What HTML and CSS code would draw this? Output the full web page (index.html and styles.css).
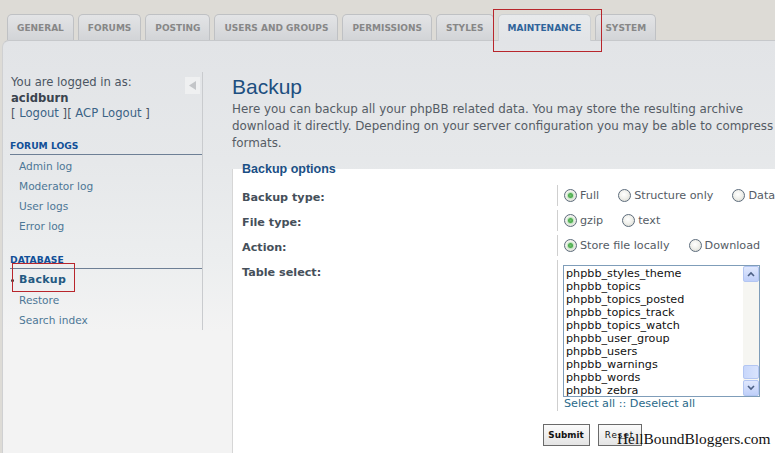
FILE: index.html
```html
<!DOCTYPE html>
<html>
<head>
<meta charset="utf-8">
<title>Backup</title>
<link rel="stylesheet" href="styles.css">
</head>
<body>
<div class="page">
  <ul class="tabs">
    <li class="tab">GENERAL</li>
    <li class="tab">FORUMS</li>
    <li class="tab">POSTING</li>
    <li class="tab">USERS AND GROUPS</li>
    <li class="tab">PERMISSIONS</li>
    <li class="tab">STYLES</li>
    <li class="tab active">MAINTENANCE</li>
    <li class="tab">SYSTEM</li>
  </ul>
  <div class="panel">
    <div class="side">
      <div class="login">
        <div class="login-text">You are logged in as:<br><strong>acidburn</strong><br>[ <a class="lnk">Logout</a> ][ <a class="lnk">ACP Logout</a> ]</div>
        <span class="collapse"><svg width="15" height="17" viewBox="0 0 15 17"><path d="M4 8.5 L11 4 L11 13 Z" fill="#c3c5c8"/></svg></span>
      </div>
      <div class="menu">
        <h3>FORUM LOGS</h3>
        <ul>
          <li><a>Admin log</a></li>
          <li><a>Moderator log</a></li>
          <li><a>User logs</a></li>
          <li><a>Error log</a></li>
        </ul>
        <h3>DATABASE</h3>
        <ul>
          <li class="active"><a>Backup</a></li>
          <li><a>Restore</a></li>
          <li><a>Search index</a></li>
        </ul>
      </div>
    </div>
    <div class="main">
      <h1>Backup</h1>
      <p class="intro">Here you can backup all your phpBB related data. You may store the resulting archive<br>download it directly. Depending on your server configuration you may be able to compress the file in a number of<br>formats.</p>
      <fieldset>
        <legend>Backup options</legend>
        <dl>
          <dt>Backup type:</dt>
          <dd>
            <label class="opt"><span class="radio on"></span>Full</label>
            <label class="opt"><span class="radio"></span>Structure only</label>
            <label class="opt"><span class="radio"></span>Data only</label>
          </dd>
        </dl>
        <dl>
          <dt>File type:</dt>
          <dd>
            <label class="opt"><span class="radio on"></span>gzip</label>
            <label class="opt"><span class="radio"></span>text</label>
          </dd>
        </dl>
        <dl>
          <dt>Action:</dt>
          <dd>
            <label class="opt"><span class="radio on"></span>Store file locally</label>
            <label class="opt"><span class="radio"></span>Download</label>
          </dd>
        </dl>
        <dl>
          <dt>Table select:</dt>
          <dd class="dd-block">
            <div class="select">
              <div class="options">
                <div>phpbb_styles_theme</div>
                <div>phpbb_topics</div>
                <div>phpbb_topics_posted</div>
                <div>phpbb_topics_track</div>
                <div>phpbb_topics_watch</div>
                <div>phpbb_user_group</div>
                <div>phpbb_users</div>
                <div>phpbb_warnings</div>
                <div>phpbb_words</div>
                <div>phpbb_zebra</div>
              </div>
              <div class="sb">
                <span class="sb-btn"><svg width="8" height="6" viewBox="0 0 8 6"><path d="M1 5 L4 2 L7 5" fill="none" stroke="#4d6185" stroke-width="1.6"/></svg></span>
                <span class="sb-track"><span class="sb-thumb"></span></span>
                <span class="sb-btn"><svg width="8" height="6" viewBox="0 0 8 6"><path d="M1 1 L4 4 L7 1" fill="none" stroke="#4d6185" stroke-width="1.6"/></svg></span>
              </div>
            </div>
            <div class="selall"><a>Select all</a> :: <a>Deselect all</a></div>
          </dd>
        </dl>
        <div class="buttons">
          <span class="btn btn-submit">Submit</span>
          <span class="btn btn-reset">Reset</span>
        </div>
      </fieldset>
    </div>
  </div>
  <div class="mark mark-tab"></div>
  <div class="mark mark-menu"></div>
  <div class="watermark">HellBoundBloggers.com</div>
</div>
</body>
</html>
```
FILE: styles.css
```css
html, body {
  margin: 0;
  padding: 0;
  height: 100%;
  overflow: hidden;
}
body {
  background: #dddbd6;
  font-family: "DejaVu Sans", Verdana, sans-serif;
  color: #4b5562;
}
.page {
  position: relative;
  width: 1000px;
}
.tabs {
  display: flex;
  gap: 4px;
  list-style: none;
  margin: 0;
  padding: 14px 0 0 7px;
  align-items: flex-end;
}
.tab {
  box-sizing: border-box;
  height: 26px;
  padding: 0 9px;
  border: 1px solid #bfc1c4;
  border-bottom: none;
  border-radius: 5px 5px 0 0;
  background: linear-gradient(#e3e4e6, #d2d4d7);
  font: bold 9px/26px "DejaVu Sans", sans-serif;
  color: #878787;
  white-space: nowrap;
}
.tab.active {
  height: 27px;
  margin-bottom: -1px;
  position: relative;
  z-index: 1;
  background: linear-gradient(#e8eaec, #e2e4e7);
  border-color: #cdd0d3;
  color: #2f649a;
}
.panel {
  display: flex;
  align-items: flex-start;
  margin-left: 2px;
  border-left: 1px solid #cfd0d2;
  border-top: 1px solid #c6c8cb;
  border-radius: 7px 0 0 0;
  height: 420px;
  background: linear-gradient(to bottom, #e2e4e7 0px, #e6e8ea 120px, #eceeef 220px, #f3f3f3 290px, #f3f3f3 100%);
}
.side {
  flex: none;
  width: 199px;
  margin-top: 31px;
  padding-top: 3px;
  border-right: 1px solid #c9cbce;
}
.login {
  display: flex;
  align-items: flex-start;
  padding-left: 8px;
}
.login-text {
  font-size: 11.6px;
  line-height: 15.5px;
  color: #4b5562;
  white-space: nowrap;
}
.login-text strong {
  color: #3a434e;
}
.lnk {
  color: #3b6386;
}
.collapse {
  margin: 2px 2px 0 auto;
  width: 15px;
  height: 17px;
  background: #eff0f1;
  display: block;
}
.collapse svg {
  display: block;
}
.menu h3 {
  margin: 18px 0 0 7px;
  padding-bottom: 2px;
  border-bottom: 1px solid #6d7f95;
  font-size: 9.2px;
  line-height: 12px;
  font-weight: bold;
  color: #115098;
}
.menu ul + h3 {
  margin-top: 18.5px;
}
.menu ul {
  list-style: none;
  margin: 1px 0 0;
  padding: 0 0 0 16px;
}
.menu li {
  font-size: 10.6px;
  line-height: 20px;
  color: #4d7796;
}
.menu li.active {
  font-size: 11px;
  font-weight: bold;
  color: #245a82;
  letter-spacing: 0.3px;
}
.menu li.active a::before {
  content: "";
  display: inline-block;
  width: 3px;
  height: 3px;
  border-radius: 50%;
  background: #333;
  margin-left: -8px;
  margin-right: 5px;
  vertical-align: middle;
}
.main {
  flex: none;
  width: 719px;
  padding: 33px 0 0 29px;
}
h1 {
  margin: 0;
  font: normal 21px/26px "Liberation Sans", Arial, sans-serif;
  color: #1d4f80;
}
.intro {
  margin: 1px 0 0;
  font-size: 11.9px;
  line-height: 17px;
  color: #555c65;
  white-space: nowrap;
}
fieldset {
  margin: 9.5px 0 0;
  padding: 7px 9px 40px;
  border: none;
  border-left: 1px solid #d6d6d6;
  background: #fff;
  min-width: 0;
}
legend {
  margin-left: 0;
  padding: 0;
  font: bold 12.5px/14px "Liberation Sans", Arial, sans-serif;
  color: #1a4f85;
}
dl {
  display: flex;
  margin: 0;
  padding: 2px 0;
}
dt {
  flex: none;
  width: 45%;
  padding-top: 4px;
  line-height: 17px;
  font-size: 11.2px;
  font-weight: bold;
  color: #454f5a;
}
dd {
  margin: 0;
  flex: 1;
  display: flex;
  align-items: center;
  height: 21px;
  padding-left: 5px;
  border-left: 1px solid #cfcfcf;
  font-size: 11.2px;
  color: #555c65;
  white-space: nowrap;
}
dd.dd-block {
  display: block;
  height: auto;
}
.opt {
  display: inline-flex;
  align-items: center;
  gap: 3px;
  margin-right: 18px;
}
.radio {
  box-sizing: border-box;
  width: 13px;
  height: 13px;
  margin-left: 1px;
  border: 1px solid #5d6c7c;
  border-radius: 50%;
  background: radial-gradient(circle at 45% 40%, #ffffff 0, #f1f1ec 45%, #d4d4cc 100%);
  display: inline-flex;
  align-items: center;
  justify-content: center;
}
.radio.on::after {
  content: "";
  width: 5px;
  height: 5px;
  border-radius: 50%;
  background: radial-gradient(circle, #72c672 0, #2c932c 100%);
  box-shadow: 0 0 1px 1px #b8e3b8;
}
.select {
  display: flex;
  box-sizing: border-box;
  width: 197px;
  height: 132px;
  margin-top: 5.5px;
  border: 1px solid #7f9db9;
  background: #fff;
  overflow: hidden;
}
.options {
  flex: 1;
  padding: 0.5px 2px 0;
  font-size: 11.2px;
  line-height: 13px;
  color: #111;
}
.sb {
  flex: none;
  width: 16px;
  display: flex;
  flex-direction: column;
  background: #f6f6f2;
}
.sb-btn {
  box-sizing: border-box;
  height: 16px;
  border: 1px solid #b3c6f2;
  border-radius: 2px;
  background: linear-gradient(#e0e8fd, #bfcff9);
  display: flex;
  align-items: center;
  justify-content: center;
}
.sb-btn svg {
  display: block;
}
.sb-track {
  flex: 1;
  display: flex;
  flex-direction: column;
  justify-content: flex-end;
  padding-bottom: 1px;
}
.sb-thumb {
  box-sizing: border-box;
  height: 14px;
  border: 1px solid #b3c6f2;
  border-radius: 2px;
  background: linear-gradient(90deg, #c8d7fb, #d9e4fd);
}
.selall {
  padding-left: 1px;
  line-height: 14px;
  color: #2a6a8a;
}
.buttons {
  display: flex;
  justify-content: center;
  gap: 8px;
  margin-top: 11px;
}
.btn {
  box-sizing: border-box;
  height: 22px;
  border: 1px solid #6a6a6a;
  background: linear-gradient(#fbfbfb, #e4e4e4);
  font-size: 8.8px;
  line-height: 20px;
  color: #111;
  text-align: center;
}
.btn-submit {
  width: 47px;
  font-weight: bold;
}
.btn-reset {
  width: 44px;
  letter-spacing: 1px;
}
.mark {
  position: absolute;
  border: 1px solid #b8262c;
}
.mark-tab {
  left: 493px;
  top: 9px;
  width: 107px;
  height: 41px;
}
.mark-menu {
  left: 12px;
  top: 263px;
  width: 61px;
  height: 27px;
}
.watermark {
  position: absolute;
  left: 617px;
  top: 431px;
  font: 15.4px/15px "Liberation Serif", "Times New Roman", serif;
  color: #111;
  white-space: nowrap;
}
```
